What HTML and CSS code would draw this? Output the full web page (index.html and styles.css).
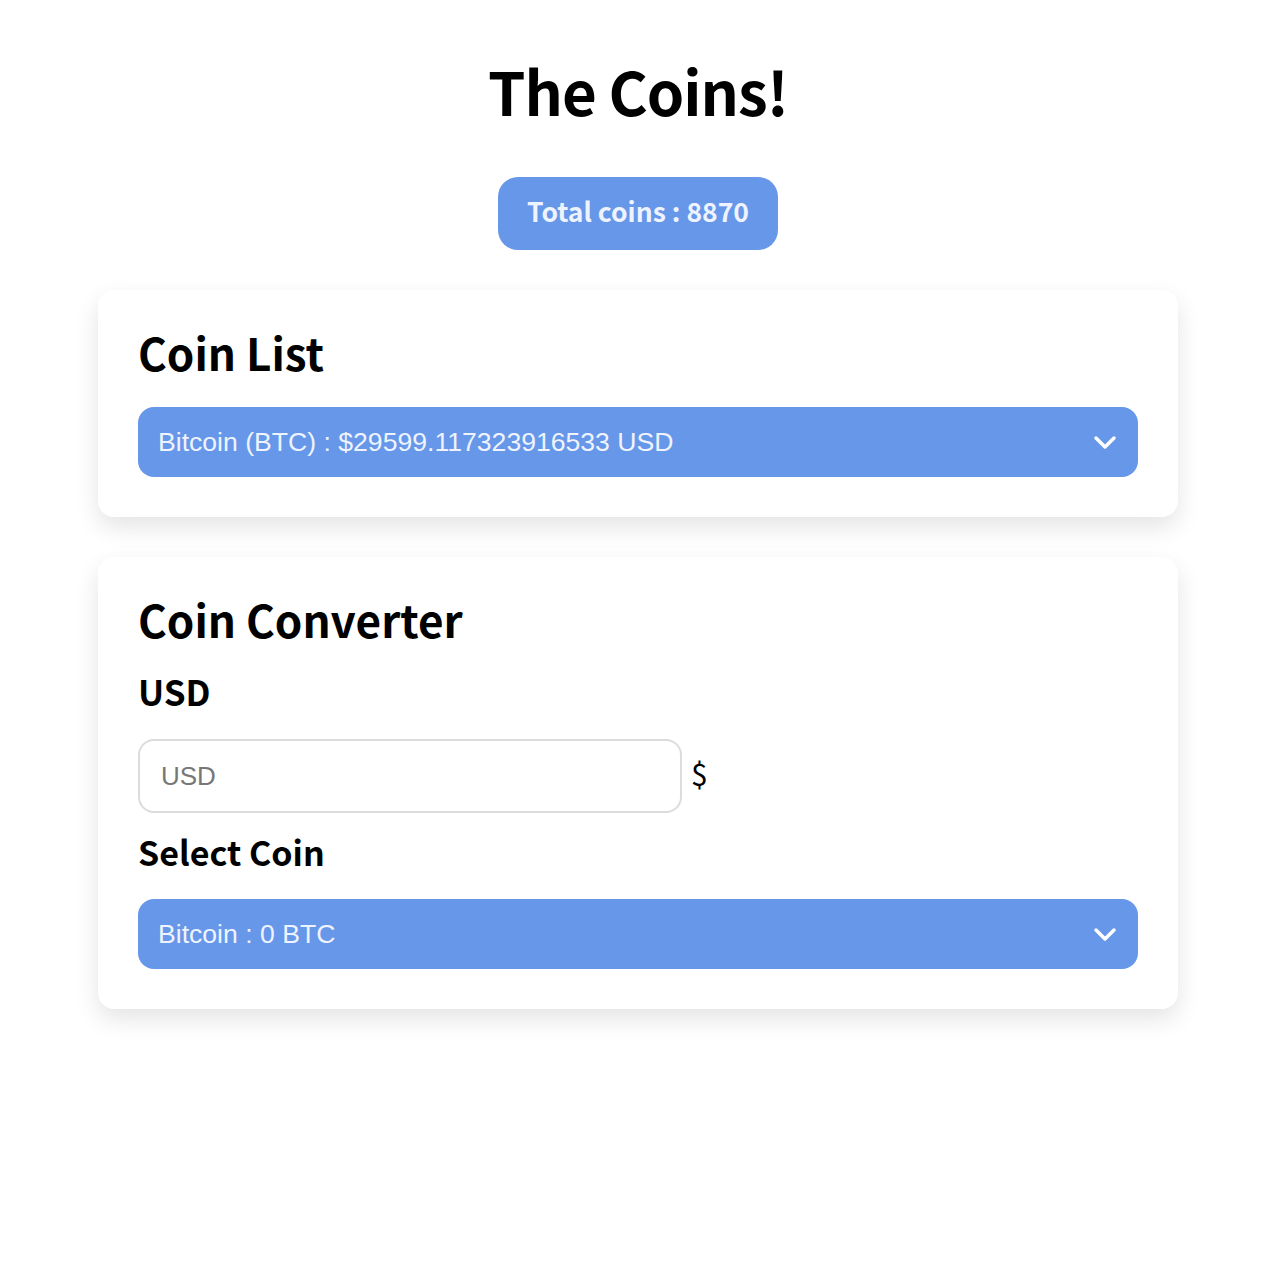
FILE: index.html
```html
<!DOCTYPE html>
<html lang="en">
<head>
<meta charset="utf-8">
<title>The Coins!</title>
<link rel="stylesheet" href="styles.css">
</head>
<body>
<main class="page">
  <h1 class="title">The Coins!</h1>
  <div class="badge">Total coins : 8870</div>
  <section class="card">
    <h2 class="card-title">Coin List</h2>
    <div class="select-wrap">
      <select class="select">
        <option>Bitcoin (BTC) : $29599.117323916533 USD</option>
      </select>
      <svg class="chevron" width="24" height="15" viewBox="0 0 24 15"><path d="M3 3 L12 12 L21 3" fill="none" stroke="#fff" stroke-width="3.5" stroke-linecap="round" stroke-linejoin="round"/></svg>
    </div>
  </section>
  <section class="card">
    <h2 class="card-title">Coin Converter</h2>
    <h3 class="label label-usd">USD</h3>
    <div class="input-row">
      <input class="input" type="text" placeholder="USD">
      <span class="unit">$</span>
    </div>
    <h3 class="label label-coin">Select Coin</h3>
    <div class="select-wrap">
      <select class="select">
        <option>Bitcoin : 0 BTC</option>
      </select>
      <svg class="chevron" width="24" height="15" viewBox="0 0 24 15"><path d="M3 3 L12 12 L21 3" fill="none" stroke="#fff" stroke-width="3.5" stroke-linecap="round" stroke-linejoin="round"/></svg>
    </div>
  </section>
</main>
</body>
</html>
```
FILE: styles.css
```css
html, body {
  margin: 0;
  padding: 0;
  background: #ffffff;
}
body {
  font-family: "Noto Sans CJK KR", "Noto Sans", sans-serif;
  color: #000;
}
.page {
  width: 1080px;
  margin: 0 auto;
  padding: 40px 0 100px 3px;
  display: flex;
  flex-direction: column;
  align-items: center;
}
.title {
  margin: 0;
  font-size: 60px;
  font-weight: 700;
  line-height: 100px;
  letter-spacing: -1px;
}
.badge {
  box-sizing: border-box;
  margin-top: 37px;
  background: #6797e8;
  color: #eef3ff;
  font-weight: 700;
  font-size: 26.5px;
  height: 73px;
  line-height: 67px;
  padding: 0 29px 6px;
  border-radius: 20px;
}
.card {
  box-sizing: border-box;
  width: 1080px;
  margin-top: 40px;
  background: #fff;
  border-radius: 16px;
  padding: 40px;
  box-shadow: 0 10px 24px rgba(0, 0, 0, 0.11);
}
.card-title {
  margin: 0 0 32px;
  font-size: 44px;
  font-weight: 700;
  line-height: 45px;
}
.label {
  margin: 0;
  font-weight: 700;
  line-height: 40px;
}
.label-usd {
  font-size: 35px;
  margin-top: -3px;
  margin-bottom: 28px;
}
.label-coin {
  font-size: 34px;
  margin-top: 19px;
  margin-bottom: 27px;
}
.select-wrap {
  position: relative;
}
.select {
  appearance: none;
  -webkit-appearance: none;
  box-sizing: border-box;
  display: block;
  width: 100%;
  height: 70px;
  border: none;
  border-radius: 16px;
  background: #6797e8;
  color: #eef3ff;
  font-family: "Liberation Sans", Arial, sans-serif;
  font-size: 26.6px;
  padding: 0 20px;
  outline: none;
}
.chevron {
  position: absolute;
  right: 21px;
  top: 28px;
  pointer-events: none;
}
.input-row {
  display: flex;
  align-items: center;
  gap: 9px;
}
.input {
  box-sizing: border-box;
  width: 544px;
  height: 74px;
  border: 2px solid #dcdcdc;
  border-radius: 16px;
  padding: 0 21px;
  font-family: "Liberation Sans", Arial, sans-serif;
  font-size: 26px;
  color: #333;
  outline: none;
}
.input::placeholder {
  color: #777;
}
.unit {
  font-size: 30px;
  line-height: 1;
  margin-top: -6px;
}
```
